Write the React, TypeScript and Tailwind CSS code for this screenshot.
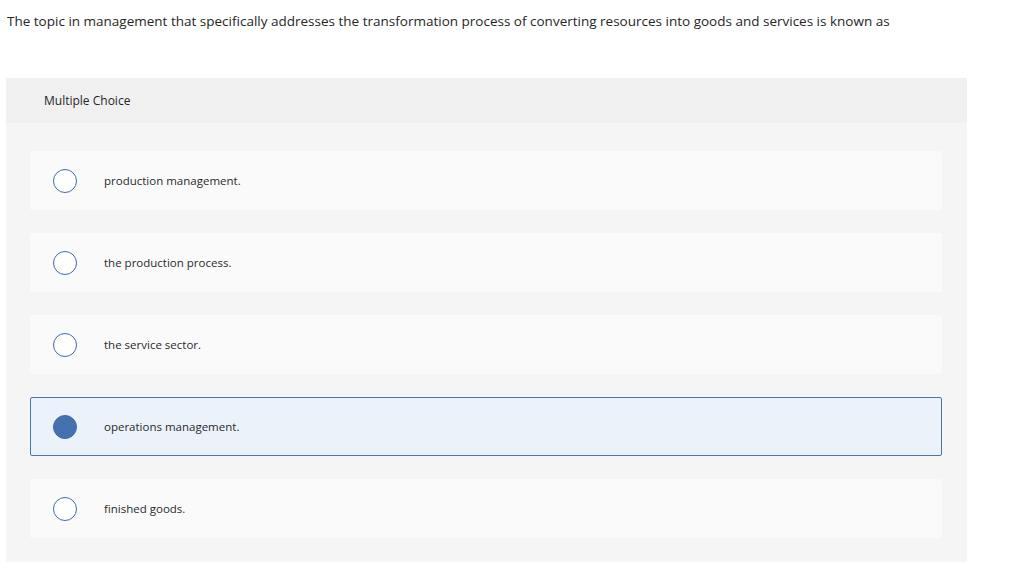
const options = [
  { label: "production management.", selected: false },
  { label: "the production process.", selected: false },
  { label: "the service sector.", selected: false },
  { label: "operations management.", selected: true },
  { label: "finished goods.", selected: false },
];

export default function App() {
  return (
    <div className="min-h-screen w-full bg-white text-[#1f1f1f]" style={{ fontFamily: '"Open Sans", "Liberation Sans", sans-serif' }}>
      <p className="pl-[7px] pt-[12px] text-[13.5px] leading-[18px] text-[#262626]">
        The topic in management that specifically addresses the transformation process of converting resources into goods and services is known as
      </p>

      <div className="mt-[48px] ml-[6px] w-[961px]">
        <div className="flex h-[45px] items-center bg-[#f0f0f0] pl-[38px] text-[12px] text-[#262626]">
          Multiple Choice
        </div>

        <div className="flex flex-col gap-[23px] bg-[#f5f5f5] pt-[28px] pb-[24px] pl-[24px]">
          {options.map((o) => (
            <div
              key={o.label}
              className={
                o.selected
                  ? "flex h-[59px] w-[912px] items-center rounded-[2px] border border-[#4a74b0] bg-[#ebf2fa] pl-[22px]"
                  : "flex h-[59px] w-[912px] items-center rounded-[2px] bg-[#fafafa] pl-[23px]"
              }
            >
              <span
                className={
                  o.selected
                    ? "h-[24px] w-[24px] shrink-0 rounded-full border border-[#3f6aa8] bg-[#4571b0]"
                    : "h-[24px] w-[24px] shrink-0 rounded-full border border-[#3f6aa8] bg-white"
                }
              />
              <span className="ml-[27px] text-[11.5px] text-[#2a2a2a]">{o.label}</span>
            </div>
          ))}
        </div>
      </div>
    </div>
  );
}
